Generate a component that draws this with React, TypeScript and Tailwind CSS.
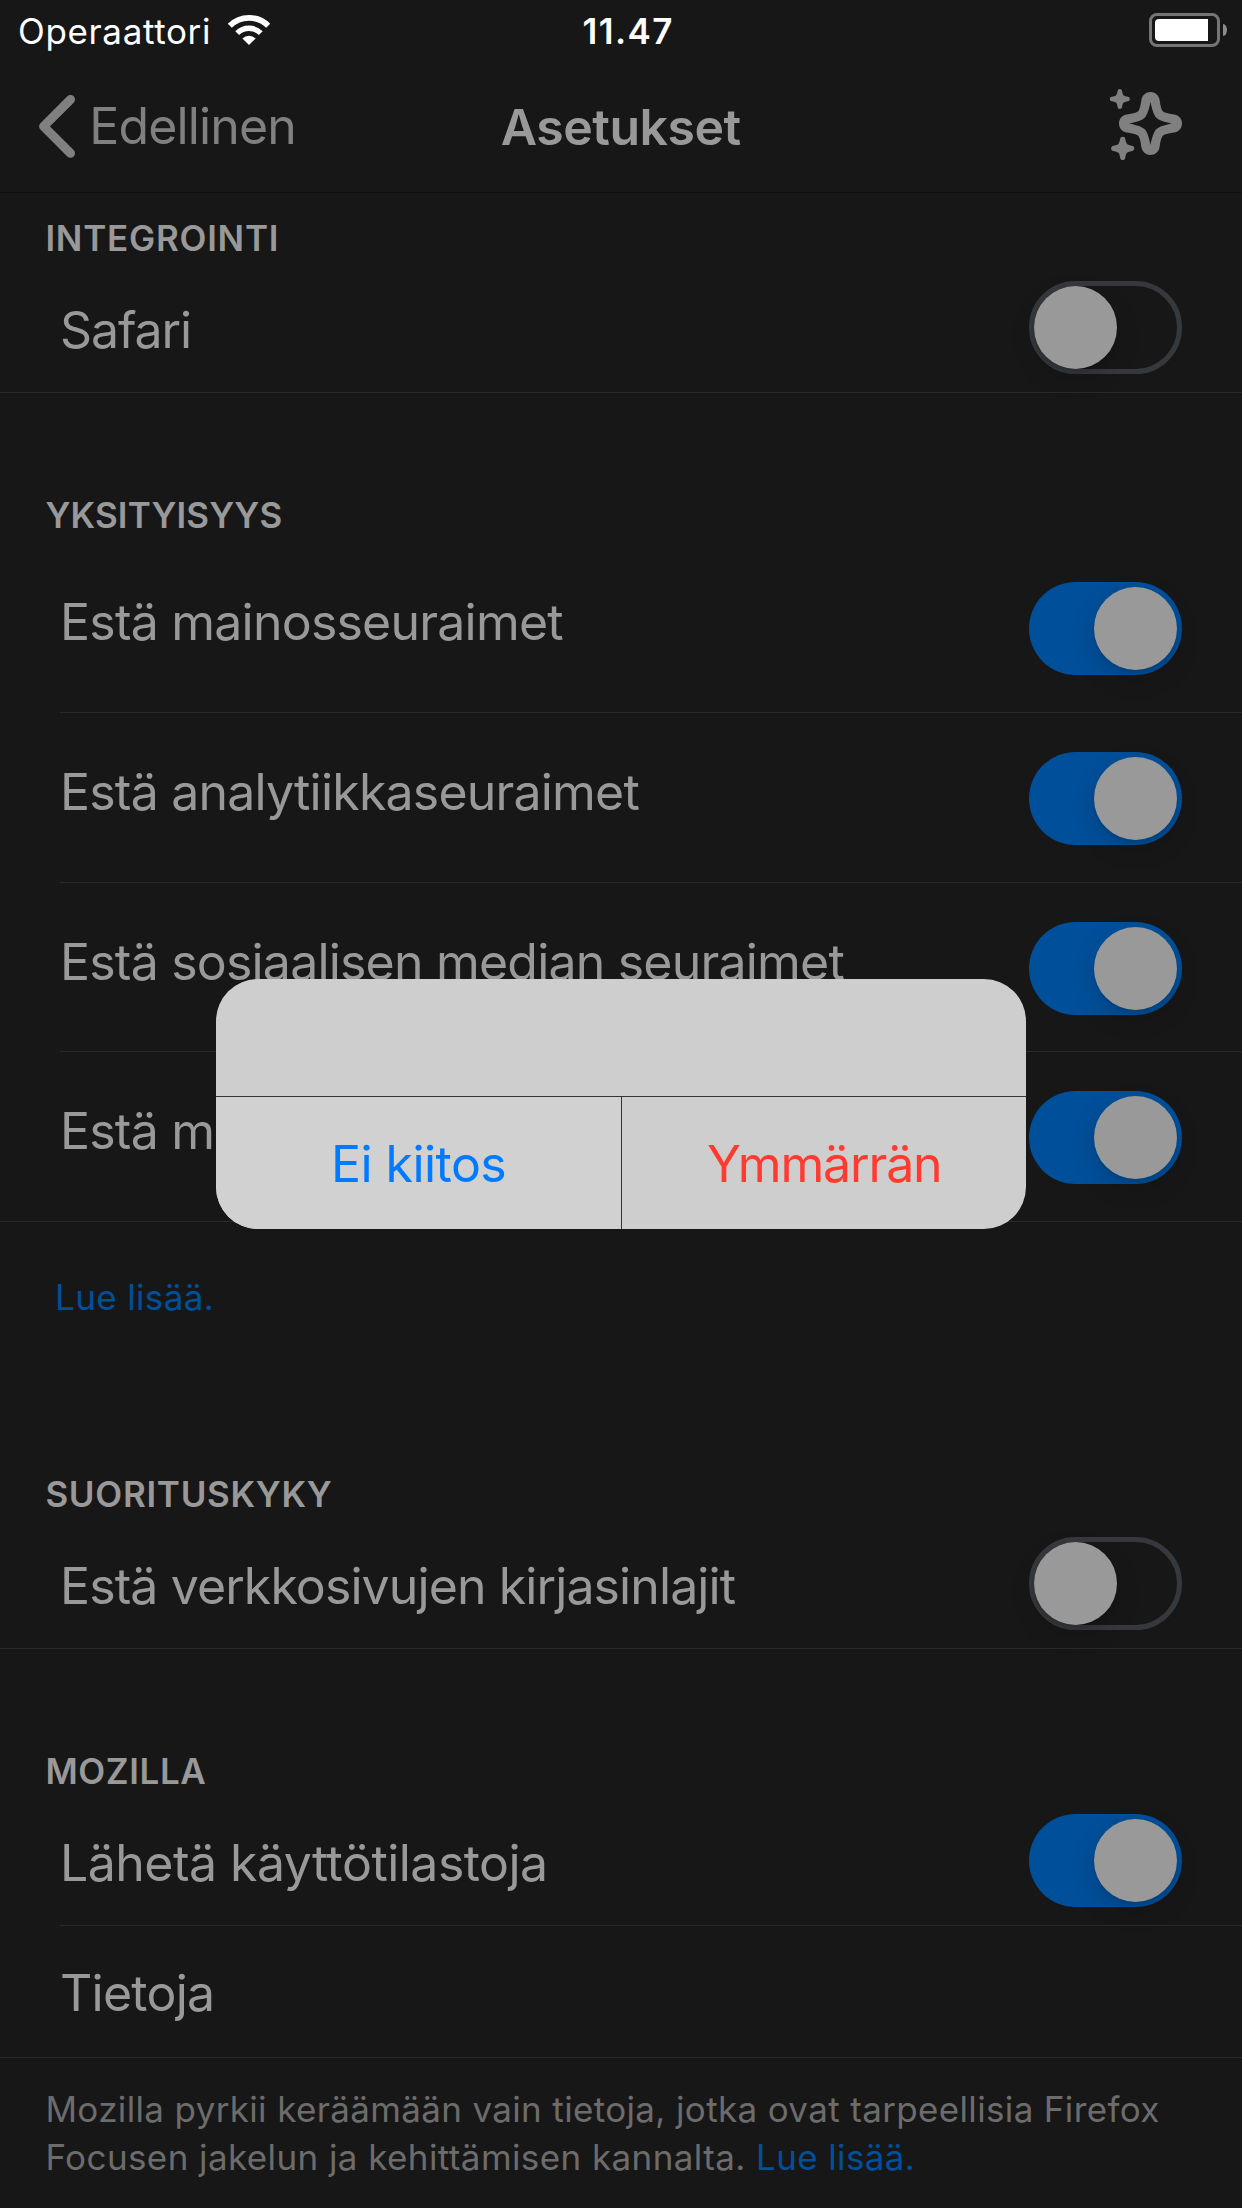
import type { ReactNode } from "react";

function Toggle({ on }: { on?: boolean }) {
  return (
    <div
      className={
        on
          ? "flex h-[93px] w-[153px] shrink-0 items-center justify-end rounded-full bg-[#004f9a] px-[5px]"
          : "flex h-[93px] w-[153px] shrink-0 items-center rounded-full border-[5px] border-[#35383c]"
      }
    >
      <div className="size-[83px] rounded-full bg-[#999999] shadow-[0_9px_24px_rgba(0,0,0,0.15),0_3px_3px_rgba(0,0,0,0.08)]" />
    </div>
  );
}

function SectionTitle({ children, spacing, className }: { children: ReactNode; spacing: string; className: string }) {
  return (
    <h2 className={`pl-[45.4px] text-[35px] leading-[42px] font-semibold text-[#999999] ${spacing} ${className}`}>
      {children}
    </h2>
  );
}

function ShortRow({ label, spacing, on, inset }: { label: string; spacing: string; on?: boolean; inset?: boolean }) {
  return (
    <div className="flex flex-col">
      <div className="flex h-[133px] items-start justify-between pr-[60px] pl-[60px]">
        <span className={`pt-[41px] text-[50px] leading-[60px] whitespace-nowrap ${spacing}`}>{label}</span>
        <div className="pt-[22px]">
          <Toggle on={on} />
        </div>
      </div>
      <div className={inset ? "ml-[60px] h-px bg-[#2a2a2b]" : "h-px bg-[#2a2a2b]"} />
    </div>
  );
}

function TallRow({ label, spacing, height, last }: { label: string; spacing: string; height: string; last?: boolean }) {
  return (
    <div className={`flex flex-col ${height}`}>
      <div className="flex flex-1 items-start justify-between pr-[60px] pl-[60px]">
        <span className={`pt-[49px] text-[50px] leading-[60px] whitespace-nowrap ${spacing}`}>{label}</span>
        <div className="pt-[39px]">
          <Toggle on />
        </div>
      </div>
      <div className={last ? "h-px bg-[#2a2a2b]" : "ml-[60px] h-px bg-[#2a2a2b]"} />
    </div>
  );
}

function WifiIcon() {
  return (
    <svg className="mt-[14px] ml-[16px] h-[32px] w-[44px]" viewBox="227 14 44 32" fill="none" stroke="#fff">
      <path d="M229.8 25.8A27.15 27.15 0 0 1 268.2 25.8" strokeWidth="5.7" />
      <path d="M237.2 33.2A16.7 16.7 0 0 1 260.8 33.2" strokeWidth="5.4" />
      <path d="M242.4 38.4A9.3 9.3 0 0 1 255.6 38.4L249 45Z" fill="#fff" stroke="none" />
    </svg>
  );
}

function BatteryIcon() {
  return (
    <div className="mt-[13px] mr-[15px] flex h-[34px] items-center gap-[3px]">
      <div className="h-[34px] w-[71px] rounded-[8px] border-[3px] border-[#757575] p-[3px]">
        <div className="h-[22px] w-[53px] rounded-l-[4px] bg-white" />
      </div>
      <div className="h-[12px] w-[4px] rounded-r-[4px_6px] bg-[#8c8c8c]" />
    </div>
  );
}

function SparkleIcon() {
  return (
    <svg className="mt-[28px] mr-[59px] h-[74px] w-[75px]" viewBox="1108 88 75 74" fill="#808080">
      <g transform="translate(1150.5 123.5)">
        <path
          fillRule="evenodd"
          d="M0-31.5C4.6-31.5 8.2-28.3 9-24C10-17.5 10.8-14 12.3-12.3C14-10.8 17.5-10 24-9C28.3-8.2 31.5-4.6 31.5 0C31.5 4.6 28.3 8.2 24 9C17.5 10 14 10.8 12.3 12.3C10.8 14 10 17.5 9 24C8.2 28.3 4.6 31.5 0 31.5C-4.6 31.5-8.2 28.3-9 24C-10 17.5-10.8 14-12.3 12.3C-14 10.8-17.5 10-24 9C-28.3 8.2-31.5 4.6-31.5 0C-31.5-4.6-28.3-8.2-24-9C-17.5-10-14-10.8-12.3-12.3C-10.8-14-10-17.5-9-24C-8.2-28.3-4.6-31.5 0-31.5ZM0-21.5C-1.5-14-3.5-8-5.8-5.8C-8-3.5-14-1.5-21.5 0C-14 1.5-8 3.5-5.8 5.8C-3.5 8-1.5 14 0 21.5C1.5 14 3.5 8 5.8 5.8C8 3.5 14 1.5 21.5 0C14-1.5 8-3.5 5.8-5.8C3.5-8 1.5-14 0-21.5Z"
        />
      </g>
      <g transform="translate(1119.8 99)">
        <path d="M0-10C1.2-10 2-9.3 2.2-8C2.7-5.2 3.2-4 4-3.6C4.8-3.1 6-2.7 8-2.2C9.3-1.9 10-1.1 10 0C10 1.1 9.3 1.9 8 2.2C6 2.7 4.8 3.1 4 3.6C3.2 4 2.7 5.2 2.2 8C2 9.3 1.2 10 0 10C-1.2 10-2 9.3-2.2 8C-2.7 5.2-3.2 4-4 3.6C-4.8 3.1-6 2.7-8 2.2C-9.3 1.9-10 1.1-10 0C-10-1.1-9.3-1.9-8-2.2C-6-2.7-4.8-3.1-4-3.6C-3.2-4-2.7-5.2-2.2-8C-2-9.3-1.2-10 0-10Z" />
      </g>
      <g transform="translate(1122.7 148.4) scale(1.16)">
        <path d="M0-10C1.2-10 2-9.3 2.2-8C2.7-5.2 3.2-4 4-3.6C4.8-3.1 6-2.7 8-2.2C9.3-1.9 10-1.1 10 0C10 1.1 9.3 1.9 8 2.2C6 2.7 4.8 3.1 4 3.6C3.2 4 2.7 5.2 2.2 8C2 9.3 1.2 10 0 10C-1.2 10-2 9.3-2.2 8C-2.7 5.2-3.2 4-4 3.6C-4.8 3.1-6 2.7-8 2.2C-9.3 1.9-10 1.1-10 0C-10-1.1-9.3-1.9-8-2.2C-6-2.7-4.8-3.1-4-3.6C-3.2-4-2.7-5.2-2.2-8C-2-9.3-1.2-10 0-10Z" />
      </g>
    </svg>
  );
}

export default function App() {
  return (
    <div className="relative h-[2208px] w-[1242px] overflow-hidden bg-[#171717] font-['Inter',sans-serif] text-[#999999]">
      <header>
        <div className="grid h-[60px] grid-cols-[500px_1fr_500px] items-start text-[35px] leading-[42px] text-white">
          <div className="flex items-start pl-[18px]">
            <span className="pt-[10px] tracking-[0.65px]">Operaattori</span>
            <WifiIcon />
          </div>
          <span className="pt-[10px] pl-[82.5px] font-semibold tracking-[1.45px]">11.47</span>
          <div className="flex justify-end">
            <BatteryIcon />
          </div>
        </div>
        <div className="grid h-[132px] grid-cols-[500px_1fr_500px] items-start text-[50px] leading-[60px]">
          <div className="flex items-start pl-[36px] text-[#808080]">
            <svg className="mt-[32px] h-[68px] w-[42px]" viewBox="36 92 42 68" fill="none" stroke="#808080" strokeWidth="9" strokeLinecap="round" strokeLinejoin="round">
              <path d="M70.5 99.5L43.6 126.4L70.5 153.3" />
            </svg>
            <span className="pt-[36px] pl-[11.3px] tracking-[-0.85px]">Edellinen</span>
          </div>
          <h1 className="pt-[37px] pl-[0.7px] font-semibold tracking-[-0.5px]">Asetukset</h1>
          <div className="flex justify-end">
            <SparkleIcon />
          </div>
        </div>
        <div className="h-px bg-[#101010]" />
      </header>

      <main>
        <SectionTitle className="pt-[24px]" spacing="tracking-[0.75px]">INTEGROINTI</SectionTitle>
        <ShortRow label="Safari" spacing="tracking-[-1.1px]" />

        <SectionTitle className="pt-[101px] pb-[7px]" spacing="tracking-[0.15px]">YKSITYISYYS</SectionTitle>
        <TallRow label="Estä mainosseuraimet" spacing="tracking-[-0.78px]" height="h-[170px]" />
        <TallRow label="Estä analytiikkaseuraimet" spacing="tracking-[-0.8px]" height="h-[170px]" />
        <TallRow label="Estä sosiaalisen median seuraimet" spacing="tracking-[-0.8px]" height="h-[169px]" />
        <TallRow label="Estä muut sisältöseuraimet" spacing="tracking-[-0.8px]" height="h-[170px]" last />
        <a className="block pt-[54px] pl-[55px] text-[35px] leading-[42px] tracking-[0.36px] text-[#004f9a]">Lue lisää.</a>

        <SectionTitle className="pt-[155px]" spacing="tracking-[0.7px]">SUORITUSKYKY</SectionTitle>
        <ShortRow label="Estä verkkosivujen kirjasinlajit" spacing="tracking-[-0.9px]" />

        <SectionTitle className="pt-[101px]" spacing="tracking-[0.6px]">MOZILLA</SectionTitle>
        <ShortRow label="Lähetä käyttötilastoja" spacing="tracking-[-0.54px]" on inset />
        <div className="h-[132px] border-b border-[#2a2a2b] pt-[37px] pl-[60px] text-[50px] leading-[60px] tracking-[-0.75px]">
          Tietoja
        </div>
        <p className="pt-[27px] pl-[45.4px] text-[35px] leading-[48px] whitespace-nowrap text-[#6c6c6c]">
          <span className="tracking-[0.35px]">Mozilla pyrkii keräämään vain tietoja, jotka ovat tarpeellisia Firefox</span>
          <br />
          <span className="tracking-[0.41px]">Focusen jakelun ja kehittämisen kannalta. </span>
          <a className="tracking-[0.36px] text-[#004f9a]">Lue lisää.</a>
        </p>
      </main>

      <div
        role="alertdialog"
        className="absolute top-[979px] left-[216px] flex h-[250px] w-[810px] flex-col overflow-hidden rounded-[42px] bg-[#cecece] text-[50px] leading-[60px]"
      >
        <div className="h-[117px]" />
        <div className="h-px bg-[#333539]" />
        <div className="flex flex-1">
          <button className="flex w-[405px] items-start bg-[#d1d1d1] pt-[37px] pl-[115px] tracking-[-0.55px] text-[#007aff]">
            Ei kiitos
          </button>
          <div className="w-px bg-[#333539]" />
          <button className="flex flex-1 items-start pt-[37px] pl-[85px] tracking-[-1.15px] text-[#ff3b30]">
            Ymmärrän
          </button>
        </div>
      </div>
    </div>
  );
}
